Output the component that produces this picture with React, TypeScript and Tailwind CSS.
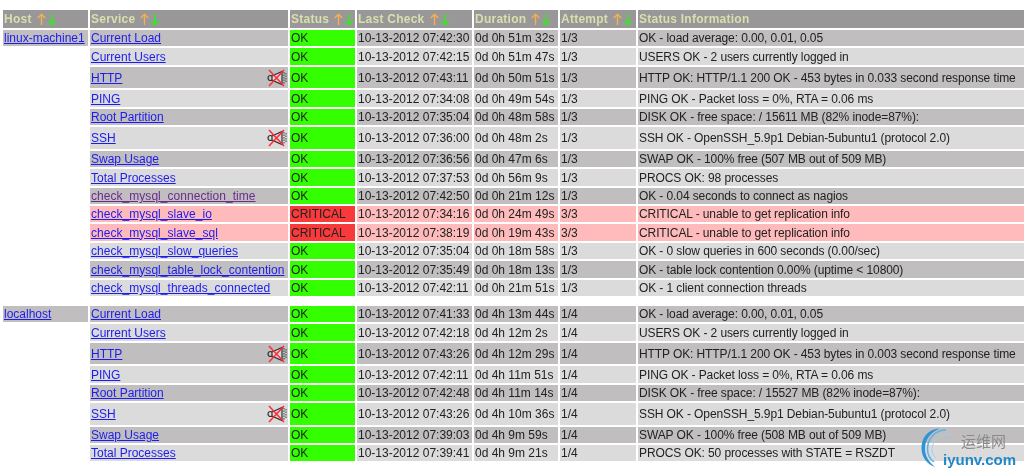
type Row = {
  host?: string;
  service: string;
  status: string;
  check: string;
  duration: string;
  attempt: string;
  info: string;
  h: string;
  muted?: boolean;
  visited?: boolean;
};

const group1: Row[] = [
  { host: "linux-machine1", service: "Current Load", status: "OK", check: "10-13-2012 07:42:30", duration: "0d 0h 51m 32s", attempt: "1/3", info: "OK - load average: 0.00, 0.01, 0.05", h: "h-[16px]" },
  { service: "Current Users", status: "OK", check: "10-13-2012 07:42:15", duration: "0d 0h 51m 47s", attempt: "1/3", info: "USERS OK - 2 users currently logged in", h: "h-[17px]" },
  { service: "HTTP", status: "OK", check: "10-13-2012 07:43:11", duration: "0d 0h 50m 51s", attempt: "1/3", info: "HTTP OK: HTTP/1.1 200 OK - 453 bytes in 0.033 second response time", h: "h-[21px]", muted: true },
  { service: "PING", status: "OK", check: "10-13-2012 07:34:08", duration: "0d 0h 49m 54s", attempt: "1/3", info: "PING OK - Packet loss = 0%, RTA = 0.06 ms", h: "h-[17px]" },
  { service: "Root Partition", status: "OK", check: "10-13-2012 07:35:04", duration: "0d 0h 48m 58s", attempt: "1/3", info: "DISK OK - free space: / 15611 MB (82% inode=87%):", h: "h-[16px]" },
  { service: "SSH", status: "OK", check: "10-13-2012 07:36:00", duration: "0d 0h 48m 2s", attempt: "1/3", info: "SSH OK - OpenSSH_5.9p1 Debian-5ubuntu1 (protocol 2.0)", h: "h-[22px]", muted: true },
  { service: "Swap Usage", status: "OK", check: "10-13-2012 07:36:56", duration: "0d 0h 47m 6s", attempt: "1/3", info: "SWAP OK - 100% free (507 MB out of 509 MB)", h: "h-[16px]" },
  { service: "Total Processes", status: "OK", check: "10-13-2012 07:37:53", duration: "0d 0h 56m 9s", attempt: "1/3", info: "PROCS OK: 98 processes", h: "h-[17px]" },
  { service: "check_mysql_connection_time", status: "OK", check: "10-13-2012 07:42:50", duration: "0d 0h 21m 12s", attempt: "1/3", info: "OK - 0.04 seconds to connect as nagios", h: "h-[16px]", visited: true },
  { service: "check_mysql_slave_io", status: "CRITICAL", check: "10-13-2012 07:34:16", duration: "0d 0h 24m 49s", attempt: "3/3", info: "CRITICAL - unable to get replication info", h: "h-[16px]" },
  { service: "check_mysql_slave_sql", status: "CRITICAL", check: "10-13-2012 07:38:19", duration: "0d 0h 19m 43s", attempt: "3/3", info: "CRITICAL - unable to get replication info", h: "h-[17px]" },
  { service: "check_mysql_slow_queries", status: "OK", check: "10-13-2012 07:35:04", duration: "0d 0h 18m 58s", attempt: "1/3", info: "OK - 0 slow queries in 600 seconds (0.00/sec)", h: "h-[16px]" },
  { service: "check_mysql_table_lock_contention", status: "OK", check: "10-13-2012 07:35:49", duration: "0d 0h 18m 13s", attempt: "1/3", info: "OK - table lock contention 0.00% (uptime < 10800)", h: "h-[17px]" },
  { service: "check_mysql_threads_connected", status: "OK", check: "10-13-2012 07:42:11", duration: "0d 0h 21m 51s", attempt: "1/3", info: "OK - 1 client connection threads", h: "h-[16px]" },
];

const group2: Row[] = [
  { host: "localhost", service: "Current Load", status: "OK", check: "10-13-2012 07:41:33", duration: "0d 4h 13m 44s", attempt: "1/4", info: "OK - load average: 0.00, 0.01, 0.05", h: "h-[16px]" },
  { service: "Current Users", status: "OK", check: "10-13-2012 07:42:18", duration: "0d 4h 12m 2s", attempt: "1/4", info: "USERS OK - 2 users currently logged in", h: "h-[17px]" },
  { service: "HTTP", status: "OK", check: "10-13-2012 07:43:26", duration: "0d 4h 12m 29s", attempt: "1/4", info: "HTTP OK: HTTP/1.1 200 OK - 453 bytes in 0.003 second response time", h: "h-[21px]", muted: true },
  { service: "PING", status: "OK", check: "10-13-2012 07:42:11", duration: "0d 4h 11m 51s", attempt: "1/4", info: "PING OK - Packet loss = 0%, RTA = 0.06 ms", h: "h-[17px]" },
  { service: "Root Partition", status: "OK", check: "10-13-2012 07:42:48", duration: "0d 4h 11m 14s", attempt: "1/4", info: "DISK OK - free space: / 15527 MB (82% inode=87%):", h: "h-[16px]" },
  { service: "SSH", status: "OK", check: "10-13-2012 07:43:26", duration: "0d 4h 10m 36s", attempt: "1/4", info: "SSH OK - OpenSSH_5.9p1 Debian-5ubuntu1 (protocol 2.0)", h: "h-[22px]", muted: true },
  { service: "Swap Usage", status: "OK", check: "10-13-2012 07:39:03", duration: "0d 4h 9m 59s", attempt: "1/4", info: "SWAP OK - 100% free (508 MB out of 509 MB)", h: "h-[16px]" },
  { service: "Total Processes", status: "OK", check: "10-13-2012 07:39:41", duration: "0d 4h 9m 21s", attempt: "1/4", info: "PROCS OK: 50 processes with STATE = RSZDT", h: "h-[16px]" },
];

const columns = ["Host", "Service", "Status", "Last Check", "Duration", "Attempt", "Status Information"];

function SortArrows() {
  return (
    <svg width="20" height="13" viewBox="0 0 20 13" fill="none" className="ml-[5px] shrink-0" strokeWidth="1.4">
      <path d="M4.5 12V1.2M0.8 5L4.5 1.2L8.2 5" stroke="#f5b050" />
      <path d="M15 1V11.8M11.3 8L15 11.8L18.7 8" stroke="#2cf01c" />
    </svg>
  );
}

function MutedBell() {
  return (
    <svg width="20" height="18" viewBox="0 0 20 18" fill="none" className="shrink-0">
      <circle cx="3.5" cy="9" r="2.5" stroke="#333" strokeWidth="1.2" />
      <path d="M5 7L15 2.5V15.5L5 11Z" fill="#d8d8d8" stroke="#333" strokeWidth="1.2" />
      <path d="M17 3V15M19 4V14" stroke="#444" strokeWidth="1.1" strokeDasharray="1.5 1" />
      <path d="M2 1L17 17M17 1L2 17" stroke="#ff2a35" strokeWidth="1.5" />
    </svg>
  );
}

function Watermark() {
  return (
    <div className="absolute left-[920px] top-[426px] h-[46px] w-[104px] blur-[0.3px]">
      <svg width="36" height="44" viewBox="0 0 36 44" fill="none" className="absolute left-0 top-0">
        <path d="M20 2.5C8 3 1 12 1.5 23C2 32 7 38 15 41C9 36 5 30 5 23C5 13 11 6 20 2.5Z" fill="#2f93d6" />
        <path d="M26 4C15 4 7.5 13 7.5 23C7.5 29 10 33 14 36" stroke="#5fb2e6" strokeWidth="1.5" />
        <path d="M29 8C20 8 12 15 12 23C12 27 13.5 30 16 32" stroke="#9ed0ee" strokeWidth="1" />
      </svg>
      <span className="absolute left-[41px] top-[5px] whitespace-nowrap font-['Noto_Sans_CJK_SC',sans-serif] text-[15px] leading-[20px] text-[#8a8a8a]">
        运维网
      </span>
      <span className="absolute left-[23px] top-[24px] whitespace-nowrap font-['Liberation_Sans',sans-serif] text-[15px] font-bold leading-[20px] text-[#1f88c9]">
        iyunv.com
      </span>
    </div>
  );
}

function ServiceRow({ row, index }: { row: Row; index: number }) {
  const critical = row.status === "CRITICAL";
  const rowBg = critical ? "bg-[#ffbbbb]" : index % 2 === 0 ? "bg-[#c0bebe]" : "bg-[#dbdbdb]";
  const cell = `px-[1px] py-0 ${rowBg}`;
  const linkColor = row.visited ? "text-[#6a2c8c]" : "text-[#1c1cf0]";
  const linkSpacing = row.service.startsWith("check_") ? "tracking-[0.04px]" : "";

  return (
    <tr className={row.h}>
      {row.host ? (
        <td className="bg-[#c0bebe] px-[1px] py-0">
          <a className="text-[#1c1cf0] underline">{row.host}</a>
        </td>
      ) : (
        <td />
      )}
      <td className={cell}>
        <div className="flex items-center justify-between">
          <a className={`${linkColor} ${linkSpacing} underline`}>{row.service}</a>
          {row.muted && <MutedBell />}
        </div>
      </td>
      <td className={critical ? "bg-[#f83a3a] px-[1px] py-0" : "bg-[#33ff00] px-[1px] py-0"}>{row.status}</td>
      <td className={cell}>{row.check}</td>
      <td className={cell}>{row.duration}</td>
      <td className={cell}>{row.attempt}</td>
      <td className={`${cell} tracking-[-0.1px]`}>{row.info}</td>
    </tr>
  );
}

export default function App() {
  return (
    <div className="relative h-[475px] w-[1024px] overflow-hidden bg-white font-['Liberation_Sans',sans-serif] text-[12px] leading-[14px] text-[#222]">
      <table className="ml-[1px] mt-[8px] w-[1033px] table-fixed border-separate border-spacing-[2px] blur-[0.5px]">
        <colgroup>
          <col className="w-[85px]" />
          <col className="w-[198px]" />
          <col className="w-[65px]" />
          <col className="w-[115px]" />
          <col className="w-[84px]" />
          <col className="w-[76px]" />
          <col />
        </colgroup>
        <thead>
          <tr className="h-[18px]">
            {columns.map((col) => (
              <th key={col} className="bg-[#999797] px-[1px] py-0 text-left text-[12px] font-bold tracking-[0.25px] text-[#dadfae]">
                <div className="flex items-center">
                  <span className="whitespace-nowrap">{col}</span>
                  {col !== "Status Information" && <SortArrows />}
                </div>
              </th>
            ))}
          </tr>
        </thead>
        <tbody>
          {group1.map((row, i) => (
            <ServiceRow key={row.service} row={row} index={i} />
          ))}
          <tr className="h-[6px]">
            <td colSpan={7} />
          </tr>
          {group2.map((row, i) => (
            <ServiceRow key={row.service} row={row} index={i} />
          ))}
        </tbody>
      </table>
      <Watermark />
    </div>
  );
}
